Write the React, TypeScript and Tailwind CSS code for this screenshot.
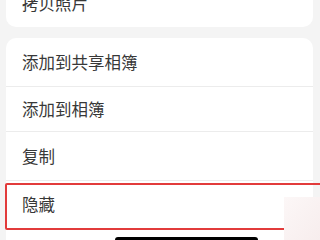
import React from 'react';

const rows = [
  { label: '添加到共享相簿', h: 'h-[49px]' },
  { label: '添加到相簿', h: 'h-[45px]' },
  { label: '复制', h: 'h-[49px]' },
];

const App: React.FC = () => {
  return (
    <div
      className="relative w-[320px] h-[240px] overflow-hidden bg-[#f4f4f4]"
      style={{ fontFamily: '"Noto Sans CJK SC", "Noto Sans", sans-serif' }}
    >
      {/* first group, scrolled mostly out of view */}
      <div className="ml-[6px] mr-[7px] -mt-[21px] rounded-[10px] bg-white">
        <div className="flex h-[48px] items-center pl-[16px] text-[16.5px] text-[#383838]">拷贝照片</div>
      </div>

      {/* second group */}
      <div className="ml-[6px] mr-[7px] mt-[11px] h-[220px] rounded-t-[10px] bg-white">
        {rows.map((row) => (
          <div key={row.label} className={`${row.h} flex items-center border-b border-[#ececec] pl-[16px] text-[16.5px] text-[#383838]`}>
            {row.label}
          </div>
        ))}
        <div className="flex h-[47px] items-center pl-[16px] text-[16.5px] text-[#383838]">隐藏</div>
      </div>

      {/* annotation box */}
      <div className="absolute left-[5px] top-[183px] h-[47px] w-[340px] rounded-[2px] border-2 border-[#e23b3b]" />

      {/* faint overlay bottom right */}
      <div className="absolute left-[284px] top-[197px] right-0 bottom-0 bg-gradient-to-br from-[#fcf7f7] to-[#f7eded]" />

      {/* home indicator */}
      <div className="absolute left-[115px] top-[237px] h-[6px] w-[143px] rounded-full bg-black" />
    </div>
  );
};

export default App;
